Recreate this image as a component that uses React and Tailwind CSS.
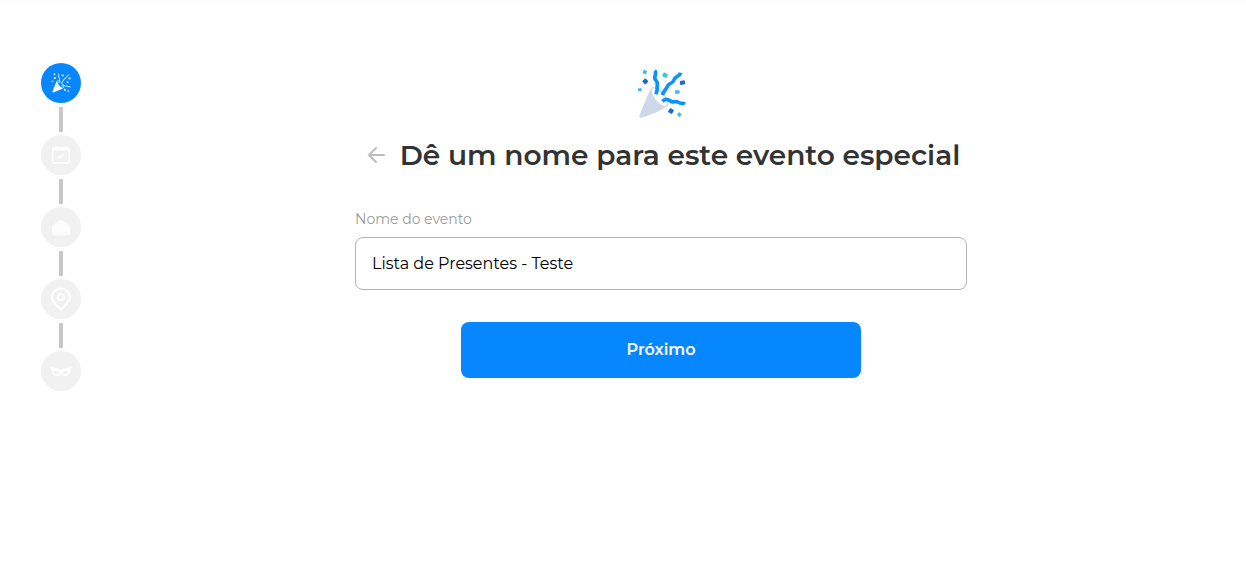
import { useState } from "react";

function PartyIcon({ className, mono = false }) {
  const blue = mono ? "#ffffff" : "#0a94ff";
  const dark = mono ? "#ffffff" : "#1769d8";
  const cyan = mono ? "#ffffff" : "#3cc1e6";
  const cone = mono ? "#ffffff" : "#cdd9e9";
  const thick = mono ? 7 : 11;
  return (
    <svg viewBox="18 24 150 150" className={className} aria-hidden="true">
      <path d="M65 82C56 92 34 150 28 166Q27 172 34 170C60 162 94 148 108 137Q116 131 111 122C94 126 76 108 75 84Z" fill={cone} />
      <path d="M65 82C56 98 86 138 108 137Q117 132 111 118C105 100 76 73 65 82Z" fill={mono ? "#0787ff" : "#ffffff"} stroke={cone} strokeWidth="4" />
      <path d="M66 83C60 94 76 126 103 137L68 148L50 121Z" fill={cone} />
      <g fill="none" stroke={blue} strokeLinejoin="round">
        <path d="M74 29C83 38 68 48 77 57C88 67 78 76 82 84L78 100" strokeWidth={thick} />
        <path d="M152 35C148 49 134 45 131 58C128 70 116 64 112 76C109 86 102 88 97 102" strokeWidth={thick} />
        <path d="M97 121C106 112 114 114 121 120C130 128 136 117 145 124C153 130 158 125 165 129" strokeWidth={thick} />
      </g>
      <g fill={dark}>
        <rect x="39" y="54" width="14" height="14" rx="3" transform="rotate(45 46 61)" />
        <rect x="150" y="59" width="15" height="12" rx="2" transform="rotate(-10 157 65)" />
        <rect x="116" y="143" width="14" height="14" rx="3" transform="rotate(30 123 150)" />
      </g>
      <g fill={cyan}>
        <rect x="39" y="28" width="11" height="11" rx="2" transform="rotate(25 45 33)" />
        <rect x="24" y="82" width="11" height="9" rx="2" />
        <rect x="98" y="36" width="14" height="13" rx="2" transform="rotate(25 105 43)" />
        <rect x="135" y="88" width="14" height="10" rx="1" />
        <rect x="143" y="155" width="11" height="11" rx="2" transform="rotate(40 148 160)" />
      </g>
    </svg>
  );
}

function CalendarIcon() {
  return (
    <svg viewBox="0 0 20 20" className="size-5" fill="none" stroke="#fff" aria-hidden="true">
      <rect x="1.8" y="2.6" width="16.4" height="15.4" rx="1.6" strokeWidth="1.4" />
      <path d="M1.5 4h17" strokeWidth="3" />
      <path d="M5 1v3M15 1v3" strokeWidth="1.6" />
      <path d="M7 11l2 1.8L13 9" strokeWidth="1.5" />
    </svg>
  );
}

function EnvelopeIcon() {
  return (
    <svg viewBox="0 0 20 20" className="size-5" aria-hidden="true">
      <path d="M1 8.500L9 3.300Q10 2.800 11 3.300L19 8.500V16.500Q19 18.500 17 18.500H3Q1 18.500 1 16.500Z" fill="#fcfcfc" />
      <path d="M4 11L10 15L16 11" fill="none" stroke="#fff" />
    </svg>
  );
}

function PinIcon() {
  return (
    <svg viewBox="0 0 24 24" className="size-6" fill="none" stroke="#fff" strokeWidth="2.2" aria-hidden="true">
      <path d="M12 22.500C9 19.500 3 15 3 10.500A9 9 0 0 1 21 10.500C21 15 15 19.500 12 22.500Z" strokeLinejoin="round" />
      <circle cx="12" cy="10" r="3" />
    </svg>
  );
}

function MaskIcon() {
  return (
    <svg viewBox="0 0 22 12" className="h-3 w-[22px]" aria-hidden="true">
      <path
        fill="#fff"
        fillRule="evenodd"
        d="M0 0.800C3 3 7 2.500 10 4.600L11 5L12 4.600C15 2.500 19 3 22 0.800C21.500 3 20.500 4.500 20 6.500C19 10.500 16.500 11.500 14 10.700C12 10 11.700 9 11 9S10 10 8 10.700C5.500 11.500 3 10.500 2 6.500C1.500 4.500 .5 3 0 0.800ZM3.500 7.300C5 4.800 8.500 5.500 9.500 7.800C8 10 4.500 9.800 3.500 7.300ZM18.500 7.300C17 4.800 13.500 5.500 12.500 7.800C14 10 17.500 9.800 18.500 7.300Z"
      />
    </svg>
  );
}

const STEPS = [
  { id: "name", label: "Nome", icon: <PartyIcon mono className="size-5" /> },
  { id: "date", label: "Data", icon: <CalendarIcon /> },
  { id: "invite", label: "Convite", icon: <EnvelopeIcon /> },
  { id: "place", label: "Local", icon: <PinIcon /> },
  { id: "theme", label: "Tema", icon: <MaskIcon /> },
];

function Stepper({ current }) {
  return (
    <ol className="flex w-10 shrink-0 flex-col items-center">
      {STEPS.map((step, i) => (
        <li key={step.id} aria-label={step.label} className="flex flex-col items-center">
          {i > 0 && <span className="mt-1 mb-[3px] h-[25px] w-1 bg-[#c8c8c8]" />}
          <span
            className={`flex size-10 items-center justify-center rounded-full ${
              i === current ? "bg-[#0787ff]" : "bg-[#f1f1f1]"
            }`}
          >
            {step.icon}
          </span>
        </li>
      ))}
    </ol>
  );
}

export default function App() {
  const [name, setName] = useState("Lista de Presentes - Teste");

  return (
    <div className="min-h-screen border-t-4 border-[#fdfdfd] bg-white font-['Montserrat','Inter',sans-serif]">
      <div className="flex items-start pt-[59px] pr-[5px] pl-[41px]">
        <Stepper current={0} />
        <main className="flex flex-1 justify-center pt-1.5">
          <form className="flex w-full max-w-[612px] flex-col" onSubmit={(e) => e.preventDefault()}>
            <PartyIcon className="mx-auto size-[50px]" />
            <div className="mt-4 flex items-center justify-center gap-3 pl-0.5">
              <button type="button" aria-label="Voltar" className="flex size-6 items-center justify-center">
                <svg viewBox="0 0 18 18" className="size-[18px]" fill="none" stroke="#bdbdbd" strokeWidth="2" aria-hidden="true">
                  <path d="M9 2L2 9l7 7M2 9h15" strokeLinecap="round" />
                </svg>
              </button>
              <h1 className="text-[28px] leading-10 font-semibold text-[#333]">
                Dê um nome para este evento especial
              </h1>
            </div>
            <label htmlFor="event-name" className="mt-8 text-sm leading-6 text-[#9b9b9b]">
              Nome do evento
            </label>
            <input
              id="event-name"
              type="text"
              value={name}
              onChange={(e) => setName(e.target.value)}
              className="mt-1.5 h-[53px] rounded-lg border border-[#b3b3b3] px-4 text-base text-black outline-none"
            />
            <button
              type="submit"
              className="mx-auto mt-8 h-14 w-full max-w-[400px] rounded-lg bg-[#0787ff] text-base font-semibold text-white"
            >
              Próximo
            </button>
          </form>
        </main>
      </div>
    </div>
  );
}
